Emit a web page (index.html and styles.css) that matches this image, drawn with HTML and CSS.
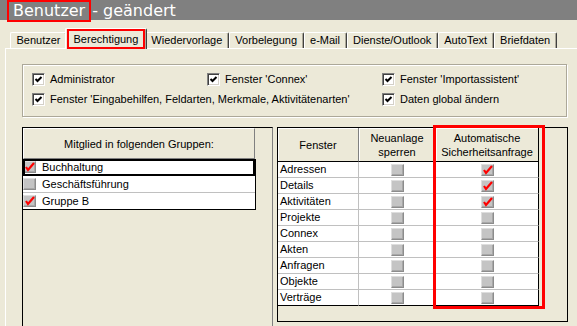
FILE: index.html
```html
<!DOCTYPE html>
<html lang="de">
<head>
    <meta charset="UTF-8">
    <title>Benutzer - geändert</title>
    <link rel="stylesheet" href="styles.css">
</head>
<body>

    <div class="titlebar">
        <span class="title-mark">Benutzer</span>
        <span class="title-rest">- geändert</span>
    </div>

    <ul class="tabs">
        <li class="tab">Benutzer</li>
        <li class="tab active">Berechtigung</li>
        <li class="tab">Wiedervorlage</li>
        <li class="tab">Vorbelegung</li>
        <li class="tab">e-Mail</li>
        <li class="tab">Dienste/Outlook</li>
        <li class="tab">AutoText</li>
        <li class="tab">Briefdaten</li>
    </ul>

    <div class="pane">

        <div class="options">
            <div class="opt"><span class="check"><svg viewBox="0 0 11 11"><polyline points="2.5,5 4.5,7 8.5,3"/></svg></span>Administrator</div>
            <div class="opt"><span class="check"><svg viewBox="0 0 11 11"><polyline points="2.5,5 4.5,7 8.5,3"/></svg></span>Fenster 'Connex'</div>
            <div class="opt"><span class="check"><svg viewBox="0 0 11 11"><polyline points="2.5,5 4.5,7 8.5,3"/></svg></span>Fenster 'Importassistent'</div>
            <div class="opt wide"><span class="check"><svg viewBox="0 0 11 11"><polyline points="2.5,5 4.5,7 8.5,3"/></svg></span>Fenster 'Eingabehilfen, Feldarten, Merkmale, Aktivitätenarten'</div>
            <div class="opt"><span class="check"><svg viewBox="0 0 11 11"><polyline points="2.5,5 4.5,7 8.5,3"/></svg></span>Daten global ändern</div>
        </div>

        <div class="panels">

            <div class="groups">
                <div class="grid-head">Mitglied in folgenden Gruppen:</div>
                <div class="list">
                    <div class="list-row selected"><span class="gcheck"><svg viewBox="0 0 13 12"><polyline points="3,6 5,9 11,2"/></svg></span>Buchhaltung</div>
                    <div class="list-row"><span class="gcheck"></span>Geschäftsführung</div>
                    <div class="list-row"><span class="gcheck"><svg viewBox="0 0 13 12"><polyline points="3,6 5,9 11,2"/></svg></span>Gruppe B</div>
                </div>
            </div>

            <div class="rights">
                <table>
                    <thead>
                        <tr>
                            <th class="c-name">Fenster</th>
                            <th class="c-lock">Neuanlage<br>sperren</th>
                            <th class="c-ask">Automatische<br>Sicherheitsanfrage</th>
                        </tr>
                    </thead>
                    <tbody id="rights-body"></tbody>
                </table>
                <div class="col-mark"></div>
            </div>

        </div>
    </div>

    <script>
        const windows = [
            ['Adressen', false, true],
            ['Details', false, true],
            ['Aktivitäten', false, true],
            ['Projekte', false, false],
            ['Connex', false, false],
            ['Akten', false, false],
            ['Anfragen', false, false],
            ['Objekte', false, false],
            ['Verträge', false, false]
        ];

        const tick = '<svg viewBox="0 0 13 12"><polyline points="3,6 5,9 11,2"/></svg>';

        function box(on) {
            return '<span class="gcheck">' + (on ? tick : '') + '</span>';
        }

        const body = document.getElementById('rights-body');
        windows.forEach(function(w) {
            const tr = document.createElement('tr');
            tr.innerHTML = '<td class="c-name">' + w[0] + '</td>' +
                '<td class="c-box">' + box(w[1]) + '</td>' +
                '<td class="c-box last">' + box(w[2]) + '</td>';
            body.appendChild(tr);
        });
    </script>

</body>
</html>
```

FILE: styles.css
```css
body {
    margin: 0;
    width: 577px;
    height: 326px;
    overflow: hidden;
    background-color: #ece9d8;
    color: #000;
    font-family: "Liberation Sans", Arial, sans-serif;
    font-size: 11px;
}

/* title */
.titlebar {
    display: flex;
    align-items: flex-start;
    height: 20px;
    padding-left: 7px;
    background-color: #808080;
    color: #fff;
    font-family: "DejaVu Sans", sans-serif;
    font-size: 16px;
    white-space: nowrap;
}
.title-mark {
    box-sizing: border-box;
    height: 22px;
    padding: 0 4px;
    border: 2px solid #f00;
    line-height: 18px;
}
.title-rest {
    margin-left: 1px;
    padding-top: 2px;
    line-height: 18px;
}

/* tabs */
.tabs {
    display: flex;
    align-items: flex-end;
    height: 20px;
    margin: 8px 0 0 10px;
    padding: 0;
    list-style: none;
}
.tab {
    box-sizing: border-box;
    height: 16px;
    padding: 0 5.5px;
    border: 1px solid;
    border-color: #fff #404040 transparent #fff;
    border-bottom: none;
    border-radius: 2px 2px 0 0;
    box-shadow: inset -1px 0 #aca899;
    line-height: 15px;
    white-space: nowrap;
}
.tab.active {
    position: relative;
    z-index: 1;
    height: 21px;
    margin: 0 -2px -1px;
    padding: 3px 7.5px 0;
    background-color: #ece9d8;
}
.tab.active::after {
    content: "";
    position: absolute;
    left: 1px;
    right: 1px;
    top: 0;
    bottom: 0;
    border: 2px solid #f00;
}

.pane {
    height: 290px;
    margin-left: 5px;
    border-top: 1px solid #fff;
    border-left: 1px solid #fff;
}

/* option group */
.options {
    display: grid;
    grid-template-columns: 175px 175px 1fr;
    align-content: start;
    row-gap: 7px;
    box-sizing: border-box;
    width: 545px;
    height: 53px;
    margin: 15px 0 0 16px;
    padding: 8px 0 0 9px;
    border: 1px solid #aca899;
    box-shadow: inset 1px 1px #fff, 1px 1px #fff;
}
.opt {
    display: flex;
    align-items: center;
    gap: 5px;
    height: 13px;
    line-height: 13px;
    white-space: nowrap;
}
.opt.wide {
    grid-column: span 2;
}
.check {
    box-sizing: border-box;
    width: 13px;
    height: 13px;
    flex: none;
    background-color: #fff;
    border: 1px solid;
    border-color: #808080 #fff #fff #808080;
    box-shadow: inset 1px 1px #404040, inset -1px -1px #d4d0c8;
}
.check svg {
    display: block;
    width: 11px;
    height: 11px;
}
.check polyline {
    fill: none;
    stroke: #000;
    stroke-width: 2;
}

/* grey grid checkbox */
.gcheck {
    display: inline-block;
    box-sizing: border-box;
    width: 13px;
    height: 12px;
    flex: none;
    vertical-align: middle;
    background-color: #c4c4c4;
    border: 1px solid;
    border-color: #dedede #8c8c8c #8c8c8c #dedede;
    box-shadow: inset -1px -1px #a8a8a8;
}
.gcheck svg {
    display: block;
    width: 13px;
    height: 12px;
    margin: -1px;
    overflow: visible;
}
.gcheck polyline {
    fill: none;
    stroke: #f00;
    stroke-width: 2.2;
}

/* lower panels */
.panels {
    display: flex;
    gap: 4px;
    margin: 10px 0 0 16px;
}

.groups {
    box-sizing: border-box;
    width: 251px;
    height: 210px;
    border-top: 1px solid #000;
    border-left: 1px solid #000;
    border-right: 1px solid #808080;
}
.grid-head {
    display: flex;
    align-items: center;
    justify-content: center;
    box-sizing: border-box;
    width: 232px;
    height: 31px;
    border: 1px solid;
    border-color: #fff #808080 #808080 #fff;
}
.list {
    width: 232px;
    border-right: 1px solid #000;
}
.list-row {
    display: flex;
    align-items: center;
    gap: 6px;
    height: 16px;
    border-bottom: 1px solid #c0c0c0;
    background-color: #fff;
    white-space: nowrap;
}
.list-row:last-child {
    border-bottom-color: #000;
}
.list-row.selected {
    outline: 2px solid #000;
    outline-offset: -2px;
}

.rights {
    position: relative;
    box-sizing: border-box;
    width: 291px;
    height: 195px;
    border: 1px solid #000;
}
.rights table {
    width: 261px;
    table-layout: fixed;
    border-collapse: separate;
    border-spacing: 0;
}
.rights th,
.rights td {
    box-sizing: border-box;
    padding: 0;
}
.rights th {
    height: 34px;
    font-weight: normal;
    line-height: 14px;
    border-right: 1px solid #808080;
    border-bottom: 1px solid #000;
    box-shadow: inset 1px 1px #fff;
}
.c-name { width: 81px; }
.c-lock { width: 77px; }
.c-ask { width: 103px; }
.rights th.c-ask {
    border-right-color: #000;
}
.rights td {
    height: 16px;
    line-height: 15px;
    background-color: #fff;
    border-right: 1px solid #c0c0c0;
    border-bottom: 1px solid #c0c0c0;
}
.rights td.c-name {
    padding-left: 2px;
    text-align: left;
}
.rights td.c-box {
    text-align: center;
}
.rights td.last {
    border-right-color: #000;
}
.rights tr:last-child td {
    border-bottom-color: #000;
}
.col-mark {
    position: absolute;
    left: 155px;
    top: -3px;
    box-sizing: border-box;
    width: 112px;
    height: 184px;
    border: 3px solid #f00;
}
```
